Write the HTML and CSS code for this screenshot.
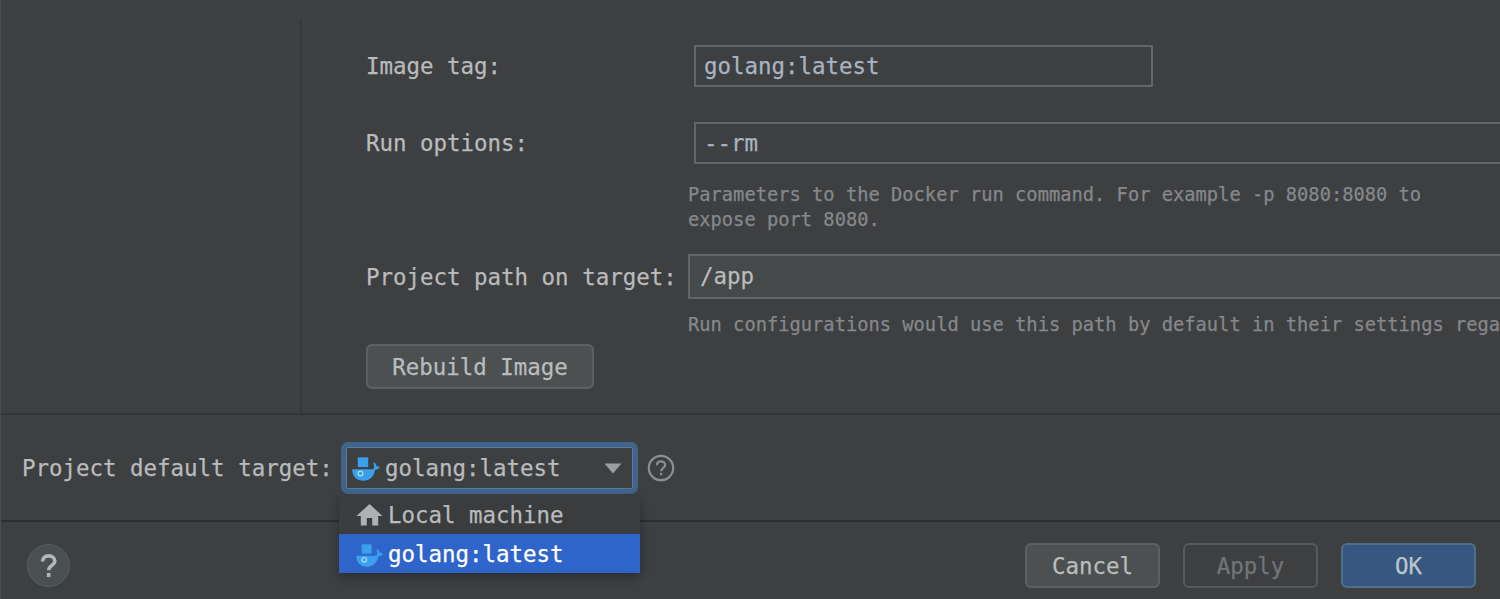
FILE: index.html
```html
<!DOCTYPE html>
<html lang="en">
<head>
<meta charset="utf-8">
<title>Run Targets</title>
<link rel="stylesheet" href="styles.css">
</head>
<body>
<svg class="defs" width="0" height="0">
  <symbol id="docker" viewBox="0 0 28 24">
    <path d="M5.800 0.300h10.400v9.800H5.800z"/>
    <path d="M0.200 12.200h20.900c1-1 1.200-2.100.7-3.800l-.3-3.400c1.900 1.100 2.800 2.500 3.100 4.200 1.100-.2 2.100.1 3.200.9-.9 1.900-2.400 2.700-4.700 2.700C21.900 19.800 17.600 23.700 11.600 23.700 4.600 23.700.2 19.300.2 12.200z"/>
    <circle class="eye" cx="8.500" cy="16.500" r="2.400"/>
  </symbol>
</svg>
<div class="dialog">
  <main class="content">
    <aside class="sidebar"></aside>
    <section class="form">
      <div class="row tag-row">
        <label class="label">Image tag:</label>
        <div class="input short">golang:latest</div>
      </div>
      <div class="row options-row">
        <label class="label">Run options:</label>
        <div class="input">--rm</div>
      </div>
      <p class="hint options-hint">Parameters to the Docker run command. For example -p 8080:8080 to<br>expose port 8080.</p>
      <div class="row path-row">
        <label class="label">Project path on target:</label>
        <div class="input path">/app</div>
      </div>
      <p class="hint path-hint">Run configurations would use this path by default in their settings rega</p>
      <button class="button rebuild">Rebuild Image</button>
    </section>
  </main>
  <section class="target">
    <span class="target-label">Project default target:</span>
    <div class="combo">
      <svg class="icon"><use href="#docker"/></svg>
      <span class="combo-text">golang:latest</span>
      <svg class="arrow" viewBox="0 0 18 11"><path d="M0.500 0.500h17L9 10.500z"/></svg>
      <div class="menu">
        <div class="item">
          <svg class="icon home" viewBox="0 0 26 22"><path d="M13 0L0 12h4.300v9.500h6V14h5.400v7.500h6V12H26z"/></svg>
          <span>Local machine</span>
        </div>
        <div class="item selected">
          <svg class="icon"><use href="#docker"/></svg>
          <span>golang:latest</span>
        </div>
      </div>
    </div>
    <svg class="info" viewBox="0 0 28 28"><circle cx="14" cy="14" r="12.200"/><path d="M10 11.300c0-2.300 1.700-3.900 4-3.900s4.100 1.500 4.100 3.700c0 3-4 3.100-4 6.100"/><path d="M14.100 18.800v2.400"/></svg>
  </section>
  <footer class="footer">
    <div class="help"><svg viewBox="0 0 18 24"><path d="M2.500 7.500C2.500 4 5 1.900 8.600 1.900s6.200 2 6.200 5.200c0 4.400-6.100 4.200-6.100 9.200"/><path d="M8.700 19v4"/></svg></div>
    <div class="actions">
      <button class="button">Cancel</button>
      <button class="button disabled">Apply</button>
      <button class="button primary">OK</button>
    </div>
  </footer>
</div>
</body>
</html>
```
FILE: styles.css
```css
* { box-sizing: border-box; }
body {
  margin: 0;
  background: #3e3f41;
  color: #b9bbbc;
  font: 22.44px/30px "DejaVu Sans Mono", monospace;
  -webkit-text-stroke: 0.25px;
  overflow: hidden;
}
.defs { display: block; height: 0; }
.dialog {
  display: flex;
  flex-direction: column;
  width: 1500px;
  height: 599px;
  overflow: hidden;
  border-left: 1px solid #4a4b4d;
}
.content {
  display: flex;
  height: 415px;
  border-bottom: 2px solid #343537;
}
.sidebar {
  flex: none;
  width: 301px;
  margin-top: 20px;
  border-right: 2px solid #37383a;
}
.form {
  flex: 1;
  min-width: 0;
  padding: 45px 0 0 64px;
}
.row { display: flex; align-items: center; white-space: nowrap; }
.label { flex: none; width: 328px; }
.input {
  flex: 1;
  height: 42px;
  padding-left: 8px;
  border: 2px solid #646567;
  border-right: 0;
  color: #a9b4c1;
  line-height: 38px;
}
.short { flex: none; width: 459px; border-right: 2px solid #646567; }
.options-row { margin-top: 35px; }
.path-row { margin-top: 22px; }
.path-row .label { width: 322px; }
.path {
  height: 45px;
  padding-left: 10px;
  background: #454949;
  color: #b9bdbd;
  line-height: 41px;
}
.hint {
  margin: 0 0 0 322px;
  color: #86888a;
  font-size: 18.74px;
  line-height: 25px;
  white-space: nowrap;
}
.options-hint { margin-top: 18px; }
.path-hint { margin-top: 13px; }
.button {
  width: 135px;
  height: 45px;
  padding: 0;
  border: 2px solid #5d6061;
  border-radius: 6px;
  background: #4c5051;
  color: #b9bdbd;
  font: inherit;
  -webkit-text-stroke: inherit;
}
.rebuild { display: block; width: 228px; margin-top: 7px; }
.target {
  display: flex;
  align-items: center;
  height: 107px;
  padding-left: 21px;
  border-bottom: 2px solid #2d2e30;
}
.target-label { flex: none; width: 319px; white-space: nowrap; }
.combo {
  position: relative;
  display: flex;
  align-items: center;
  width: 297px;
  height: 52px;
  padding: 0 11px 0 6px;
  border: 5px solid #3f658e;
  border-radius: 7px;
  box-shadow: inset 0 0 0 1px #5c7b9b;
}
.icon { flex: none; width: 28px; height: 24px; margin-top: 2px; fill: #38a0ec; }
.eye { fill: #399fe9; stroke: #b5dcf8; stroke-width: 1.2; }
.combo-text { flex: 1; margin-left: 5px; }
.arrow { width: 18px; height: 11px; margin-top: 2px; fill: #9b9d9f; }
.menu {
  position: absolute;
  z-index: 1;
  top: 48px;
  left: -7px;
  width: 301px;
  background: #3b3c3e;
  box-shadow: 0 4px 10px rgba(0, 0, 0, 0.3);
}
.item {
  display: flex;
  align-items: center;
  gap: 5px;
  height: 39px;
  padding: 2px 0 0 17px;
}
.item .icon { width: 27px; height: 23px; }
.item .home { height: 22px; margin-top: 0; fill: #aeb0b2; }
.selected { background: #2f65ca; color: #fff; }
.info {
  width: 28px;
  height: 28px;
  margin-left: 9px;
  fill: none;
  stroke: #8c8e90;
  stroke-width: 2.2;
}
.footer {
  flex: 1;
  display: flex;
  justify-content: space-between;
  align-items: flex-start;
  padding: 21px 24px 0 26px;
}
.help {
  display: flex;
  align-items: center;
  justify-content: center;
  width: 43px;
  height: 43px;
  margin-top: 1px;
  border: 1px solid #5b5f60;
  border-radius: 50%;
  background: #4a4f50;
}
.help svg { width: 18px; height: 24px; fill: none; stroke: #b4b7b8; stroke-width: 3.6; }
.actions { display: flex; gap: 23px; }
.disabled { background: transparent; border-color: #58595b; color: #737577; }
.primary { background: #365880; border-color: #4c708c; color: #bdc5cc; }
```
